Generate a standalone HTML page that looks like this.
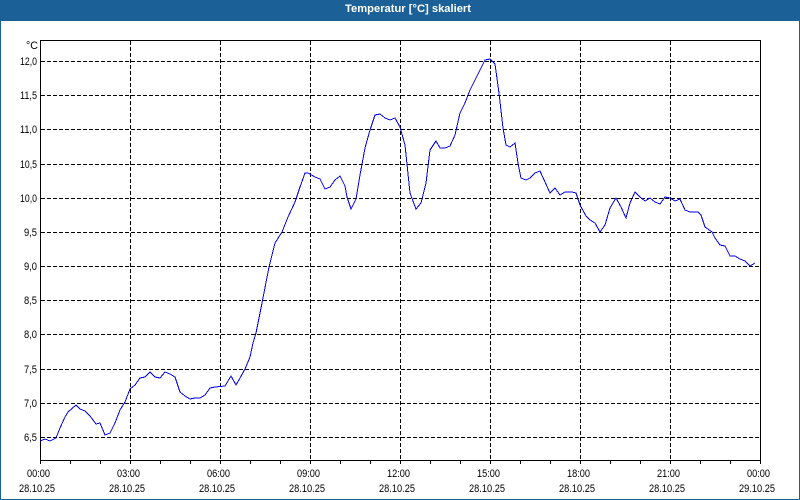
<!DOCTYPE html>
<html lang="de">
<head>
<meta charset="utf-8">
<title>Temperatur</title>
<style>
html,body{margin:0;padding:0;background:#fff}
#w{position:relative;width:800px;height:500px;overflow:hidden;background:#fff}
svg{position:absolute;left:0;top:0}
text{font-family:"Liberation Sans",sans-serif;font-size:11px;fill:#000}
.t{font-weight:bold;fill:#fff;font-size:11px}
</style>
</head>
<body>
<div id="w">
<svg width="800" height="500" viewBox="0 0 800 500" xmlns="http://www.w3.org/2000/svg">
<rect x="0" y="0" width="800" height="21" fill="#1b6097"/>
<rect x="0" y="0" width="1" height="500" fill="#1b6097"/>
<rect x="799" y="0" width="1" height="500" fill="#1b6097"/>
<rect x="0" y="499" width="800" height="1" fill="#1b6097"/>
<text class="t" x="345" y="12" textLength="126" lengthAdjust="spacingAndGlyphs">Temperatur [°C] skaliert</text>

<g shape-rendering="crispEdges" stroke="#000" stroke-width="1" stroke-dasharray="4 2" fill="none">
<path d="M41 61.5H760M41 95.5H760M41 129.5H760M41 164.5H760M41 198.5H760M41 232.5H760M41 266.5H760M41 300.5H760M41 334.5H760M41 369.5H760M41 403.5H760M41 437.5H760"/>
<path d="M130.5 41V460M220.5 41V460M310.5 41V460M400.5 41V460M490.5 41V460M580.5 41V460M670.5 41V460"/>
</g>
<g shape-rendering="crispEdges" fill="#000">
<rect x="40" y="40" width="721" height="1"/>
<rect x="40" y="40" width="1" height="421"/>
<rect x="760" y="40" width="1" height="421"/>
<rect x="40" y="460" width="721" height="1"/>
<path d="M40 461h1v3h-1zM70 461h1v3h-1zM100 461h1v3h-1zM130 461h1v3h-1zM160 461h1v3h-1zM190 461h1v3h-1zM220 461h1v3h-1zM250 461h1v3h-1zM280 461h1v3h-1zM310 461h1v3h-1zM340 461h1v3h-1zM370 461h1v3h-1zM400 461h1v3h-1zM430 461h1v3h-1zM460 461h1v3h-1zM490 461h1v3h-1zM520 461h1v3h-1zM550 461h1v3h-1zM580 461h1v3h-1zM610 461h1v3h-1zM640 461h1v3h-1zM670 461h1v3h-1zM700 461h1v3h-1zM730 461h1v3h-1zM760 461h1v3h-1z"/>
</g>

<polyline shape-rendering="crispEdges" fill="none" stroke="#0000e6" stroke-width="1" points="40,441 45,439 50,441 56,438 60,428 65,417 68,412 76,405 80,409 85,411 90,416 96,424 100,423 105,435 110,433 115,423 120,410 125,402 130,389 135,385 140,378 145,377 150,372 155,377 160,378 165,372 170,374 175,377 180,392 185,396 190,399 195,398 200,398 205,395 210,388 215,387 225,386 231,376 236,385 240,378 245,369 250,357 253,343 256,333 262,303 269,267 275,243 282,232 288,217 295,202 300,187 305,173 308,173 315,177 320,179 325,189 330,187 335,180 340,176 345,186 347,197 351,209 356,199 360,175 365,148 370,130 375,115 380,114 385,118 390,120 395,118 400,127 405,145 410,193 416,209 421,203 426,183 430,150 436,141 440,148 445,148 450,146 455,135 460,113 465,103 470,90 475,80 480,70 485,60 490,59 495,64 499,93 503,128 506,145 510,147 515,143 518,163 521,178 526,180 530,178 535,173 540,171 545,182 550,193 555,188 560,195 565,192 572,192 576,193 580,205 586,216 590,220 595,223 600,232 605,225 610,208 616,198 621,207 626,218 630,203 635,192 640,197 645,201 650,198 655,202 660,204 665,197 670,198 675,201 680,199 685,210 690,212 698,212 701,215 705,227 712,232 715,238 720,245 725,246 730,256 735,256 740,259 745,261 750,266 755,263"/>

<g>
<text x="26" y="49" textLength="12" lengthAdjust="spacingAndGlyphs">°C</text>
<text x="20" y="65" textLength="17" lengthAdjust="spacingAndGlyphs">12,0</text>
<text x="20" y="99" textLength="17" lengthAdjust="spacingAndGlyphs">11,5</text>
<text x="20" y="133" textLength="17" lengthAdjust="spacingAndGlyphs">11,0</text>
<text x="20" y="168" textLength="17" lengthAdjust="spacingAndGlyphs">10,5</text>
<text x="20" y="202" textLength="17" lengthAdjust="spacingAndGlyphs">10,0</text>
<text x="24" y="236" textLength="13" lengthAdjust="spacingAndGlyphs">9,5</text>
<text x="24" y="270" textLength="13" lengthAdjust="spacingAndGlyphs">9,0</text>
<text x="24" y="304" textLength="13" lengthAdjust="spacingAndGlyphs">8,5</text>
<text x="24" y="338" textLength="13" lengthAdjust="spacingAndGlyphs">8,0</text>
<text x="24" y="373" textLength="13" lengthAdjust="spacingAndGlyphs">7,5</text>
<text x="24" y="407" textLength="13" lengthAdjust="spacingAndGlyphs">7,0</text>
<text x="24" y="441" textLength="13" lengthAdjust="spacingAndGlyphs">6,5</text>
</g>
<g>
<text x="27" y="477" textLength="23" lengthAdjust="spacingAndGlyphs">00:00</text><text x="19" y="492" textLength="36" lengthAdjust="spacingAndGlyphs">28.10.25</text>
<text x="117" y="477" textLength="23" lengthAdjust="spacingAndGlyphs">03:00</text><text x="109" y="492" textLength="36" lengthAdjust="spacingAndGlyphs">28.10.25</text>
<text x="207" y="477" textLength="23" lengthAdjust="spacingAndGlyphs">06:00</text><text x="199" y="492" textLength="36" lengthAdjust="spacingAndGlyphs">28.10.25</text>
<text x="297" y="477" textLength="23" lengthAdjust="spacingAndGlyphs">09:00</text><text x="289" y="492" textLength="36" lengthAdjust="spacingAndGlyphs">28.10.25</text>
<text x="387" y="477" textLength="23" lengthAdjust="spacingAndGlyphs">12:00</text><text x="379" y="492" textLength="36" lengthAdjust="spacingAndGlyphs">28.10.25</text>
<text x="477" y="477" textLength="23" lengthAdjust="spacingAndGlyphs">15:00</text><text x="469" y="492" textLength="36" lengthAdjust="spacingAndGlyphs">28.10.25</text>
<text x="567" y="477" textLength="23" lengthAdjust="spacingAndGlyphs">18:00</text><text x="559" y="492" textLength="36" lengthAdjust="spacingAndGlyphs">28.10.25</text>
<text x="657" y="477" textLength="23" lengthAdjust="spacingAndGlyphs">21:00</text><text x="649" y="492" textLength="36" lengthAdjust="spacingAndGlyphs">28.10.25</text>
<text x="747" y="477" textLength="23" lengthAdjust="spacingAndGlyphs">00:00</text><text x="739" y="492" textLength="36" lengthAdjust="spacingAndGlyphs">29.10.25</text>
</g>
</svg>
</div>
</body>
</html>
